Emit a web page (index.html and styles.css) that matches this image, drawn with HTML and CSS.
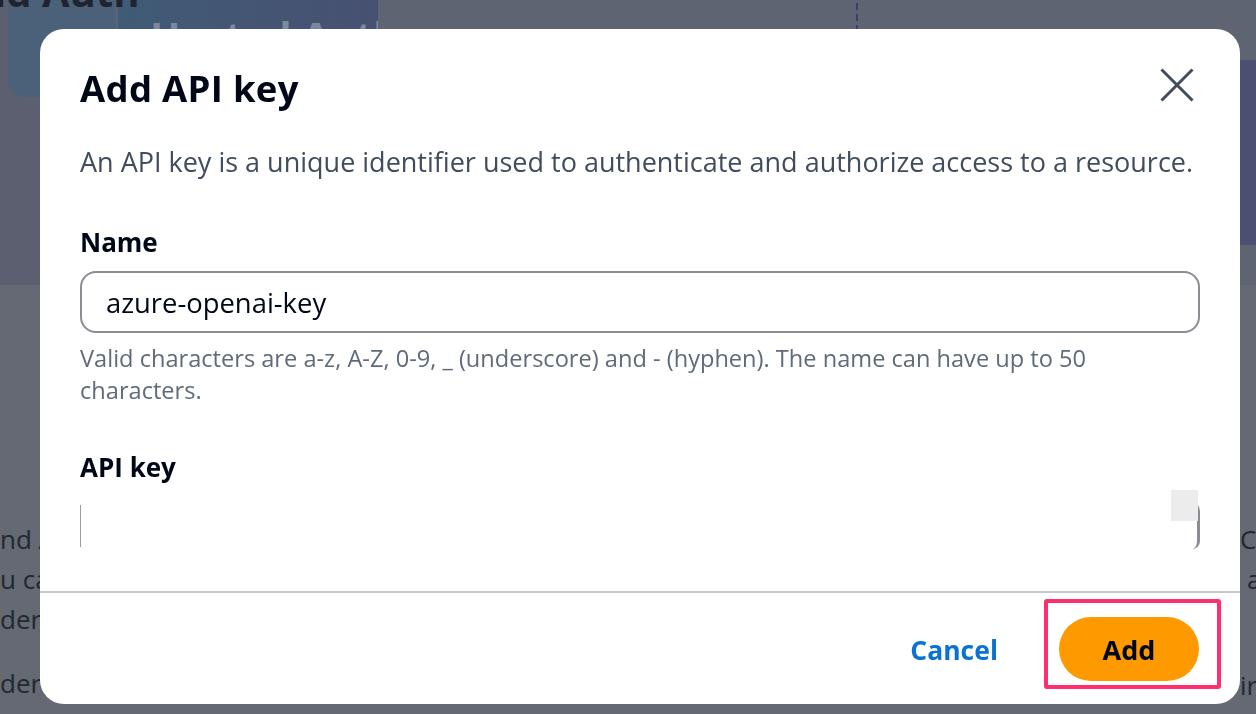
FILE: index.html
```html
<!DOCTYPE html>
<html lang="en">
<head>
<meta charset="utf-8">
<title>Add API key</title>
<link rel="stylesheet" href="styles.css">
</head>
<body>
<div class="page">
  <div class="bg-top">
    <div class="bg-title">id Auth</div>
    <div class="bg-card"></div>
    <div class="bg-tab"><span class="bg-tab-text">Hosted Auth</span></div>
    <div class="bg-rest"><span class="bg-dash"></span></div>
  </div>
  <div class="bg-side"></div>
  <div class="bg-bottom">
    <div class="bg-col-left">
      <p class="bg-line l1">nd API</p>
      <p class="bg-line l2">u can</p>
      <p class="bg-line l3">der.</p>
      <p class="bg-line l4">der.</p>
    </div>
    <div class="bg-col-right">
      <p class="bg-line r1">Cr</p>
      <p class="bg-line r2">a</p>
      <p class="bg-line r4">ir</p>
    </div>
  </div>
</div>

<div class="modal" role="dialog" aria-labelledby="dlg-title">
  <div class="modal-header">
    <h2 id="dlg-title" class="modal-title">Add API key</h2>
    <button class="close-btn" aria-label="Close">
      <svg width="34" height="34" viewBox="0 0 34 34"><path d="M1.5 1.5 L32.5 32.5 M32.5 1.5 L1.5 32.5" stroke="#414d5c" stroke-width="3" fill="none"/></svg>
    </button>
  </div>
  <div class="modal-body">
    <p class="desc">An API key is a unique identifier used to authenticate and authorize access to a resource.</p>
    <div class="field">
      <label class="label">Name</label>
      <div class="input">azure-openai-key</div>
      <p class="hint">Valid characters are a-z, A-Z, 0-9, _ (underscore) and - (hyphen). The name can have up to 50 characters.</p>
    </div>
    <div class="field field-key">
      <label class="label">API key</label>
      <div class="key-area">
        <span class="key-left"></span>
        <span class="key-fill"></span>
        <span class="key-right"><span class="key-thumb"></span></span>
      </div>
    </div>
  </div>
  <div class="modal-footer">
    <button class="btn-link">Cancel</button>
    <div class="highlight">
      <button class="btn-primary">Add</button>
    </div>
  </div>
</div>
</body>
</html>
```

FILE: styles.css
```css
* { box-sizing: border-box; }
html, body { margin: 0; padding: 0; }
body {
  width: 1256px;
  height: 714px;
  overflow: hidden;
  background: #656973;
  font-family: "Open Sans", "Noto Sans", sans-serif;
}

/* ---------- dimmed page behind the dialog ---------- */
.page { width: 1256px; height: 714px; display: flex; flex-direction: column; }
.bg-top {
  height: 285px;
  display: flex;
  background: #5c5f6f;
  position: relative;
}
.bg-title {
  position: absolute;
  left: -6px; top: -36px;
  font-size: 40px; font-weight: 700; color: #1f2430;
}
.bg-card {
  width: 110px; height: 97px;
  margin-left: 8px;
  background: #4b6179;
  border-radius: 0 0 0 16px;
  border-right: 2px solid #5a6478;
}
.bg-tab {
  width: 260px; height: 285px;
  background: linear-gradient(100deg, #405b76, #484f70);
  padding: 16px 0 0 32px;
  line-height: 40px;
}
.bg-tab-text { font-size: 40px; line-height: 40px; font-weight: 700; color: #7c889c; white-space: nowrap; }
.bg-rest { flex: 1; background: #5f6472; position: relative; }
.bg-dash {
  position: absolute; left: 478px; top: 3px;
  width: 2px; height: 26px;
  background: repeating-linear-gradient(#3a4170 0 7px, transparent 7px 11px);
}
.bg-side {
  position: absolute; left: 1236px; top: 60px;
  width: 20px; height: 185px;
  background: #4b5073;
}
.bg-bottom { flex: 1; display: flex; justify-content: space-between; }
.bg-col-left, .bg-col-right { width: 40px; overflow: hidden; padding-top: 234px; }
.bg-col-right { width: 16px; }
.bg-line { margin: 0; height: 40px; font-size: 26px; line-height: 40px; color: #23272f; white-space: nowrap; }
.l3 { height: 42px; }
.l4 { margin-top: 22px; }
.r2 { padding-left: 7px; }
.r4 { margin-top: 66px; }

/* ---------- dialog ---------- */
.modal {
  position: fixed;
  left: 40px; top: 29px;
  width: 1200px; height: 675px;
  background: #ffffff;
  border-radius: 24px;
  display: flex;
  flex-direction: column;
  overflow: hidden;
}
.modal-header {
  display: flex;
  align-items: flex-start;
  justify-content: space-between;
  padding: 35px 46px 0 40px;
}
.modal-title {
  margin: 0;
  font-size: 36.5px;
  line-height: 48px;
  font-weight: 700;
  color: #000716;
  letter-spacing: 0.3px;
}
.close-btn {
  border: 0; background: none; padding: 0; margin-top: 4px;
  width: 34px; height: 34px; display: block;
}
.close-btn svg { display: block; }

.modal-body {
  flex: 1;
  padding: 0 40px;
  overflow: hidden;
}
.desc {
  margin: 32px 0 0;
  font-size: 27px;
  line-height: 36px;
  color: #414d5c;
  white-space: nowrap;
}
.field { margin-top: 45px; }
.label {
  display: block;
  font-size: 26px;
  line-height: 34px;
  font-weight: 700;
  color: #000716;
}
.input {
  margin-top: 12px;
  height: 62px;
  border: 2px solid #8c8c94;
  border-radius: 16px;
  padding: 0 24px;
  display: flex;
  align-items: center;
  font-size: 27.4px;
  color: #000716;
}
.hint {
  margin: 9px 0 0;
  width: 1040px;
  font-size: 23.6px;
  line-height: 32px;
  color: #5f6b7a;
}
.field-key { margin-top: 44px; }
.key-area {
  margin-top: 6px;
  height: 59px;
  display: flex;
  align-items: flex-start;
}
.key-left { width: 1px; height: 42px; margin-top: 15px; background: #9a9aa2; }
.key-fill { flex: 1; }
.key-right {
  width: 29px; height: 48px;
  margin-top: 11px;
  border-right: 3px solid #8c8c94;
  border-top-right-radius: 10px;
  border-bottom-right-radius: 8px;
  position: relative;
}
.key-thumb {
  position: absolute; left: 0; top: -11px;
  width: 27px; height: 31px;
  background: #ececec;
}

.modal-footer {
  height: 113px;
  border-top: 2px solid #c6c6cd;
  display: flex;
  align-items: flex-start;
  justify-content: flex-end;
  padding: 6px 19px 0 0;
  gap: 46px;
}
.btn-link {
  border: 0; background: none; padding: 0;
  margin-top: 34px;
  font-family: inherit;
  font-size: 26.5px; line-height: 34px; font-weight: 700;
  color: #0972d3;
}
.highlight {
  width: 177px; height: 90px;
  border: 4px solid #ff2f6e;
  border-radius: 3px;
  display: flex;
  align-items: flex-end;
  padding: 0 0 4px 11px;
}
.btn-primary {
  width: 140px; height: 64px;
  border: 0; border-radius: 32px;
  background: #ff9900;
  font-family: inherit;
  font-size: 27px; font-weight: 700;
  color: #000716;
}
```
